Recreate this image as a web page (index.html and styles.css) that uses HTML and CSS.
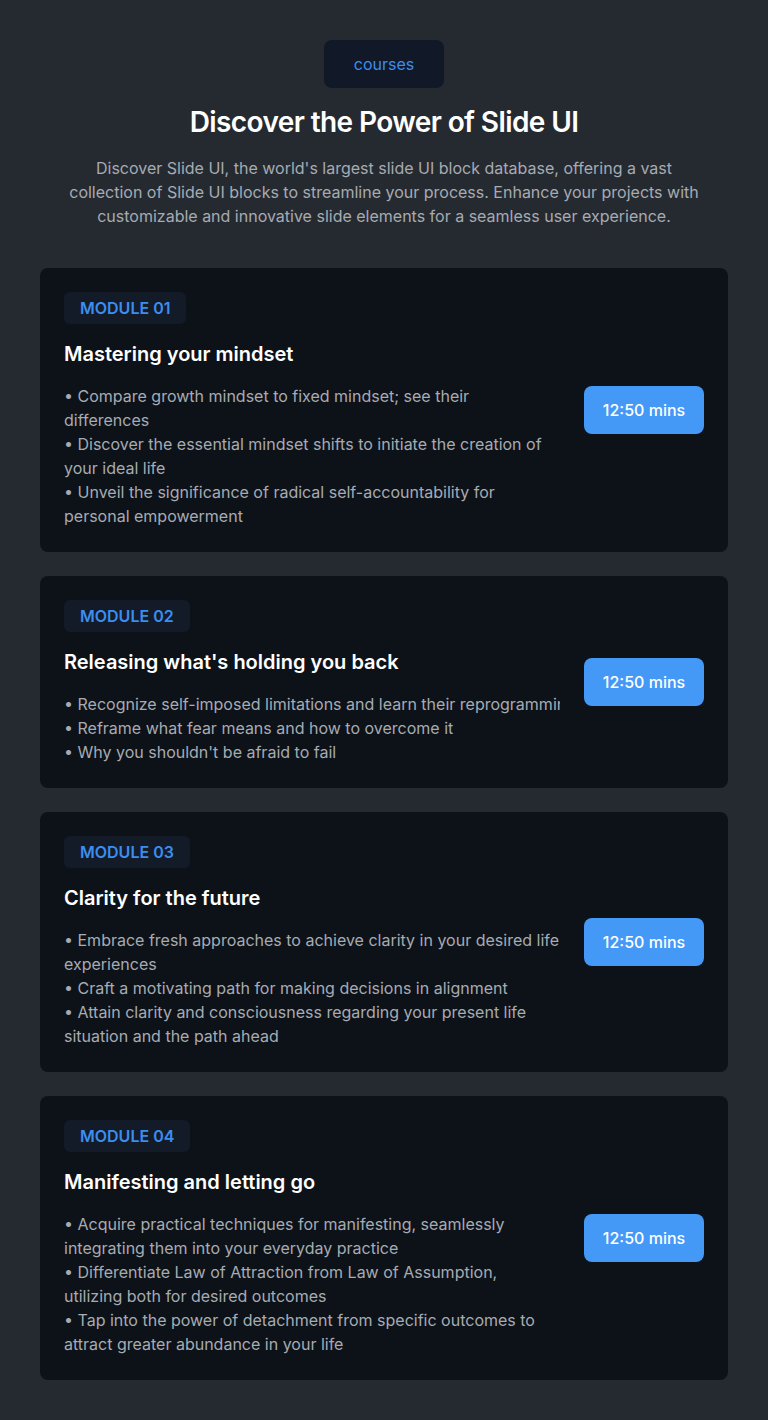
FILE: index.html
```html
<!DOCTYPE html>
<html lang="en">
<head>
<meta charset="utf-8">
<title>Courses</title>
<link rel="stylesheet" href="styles.css">
</head>
<body>
<main class="page">
  <header class="intro">
    <span class="tag">courses</span>
    <h1 class="heading">Discover the Power of Slide UI</h1>
    <p class="lead">Discover Slide UI, the world's largest slide UI block database, offering a vast collection of Slide UI blocks to streamline your process. Enhance your projects with customizable and innovative slide elements for a seamless user experience.</p>
  </header>

  <section class="modules">
    <article class="card">
      <div class="content">
        <span class="module-tag">MODULE 01</span>
        <h2 class="title">Mastering your mindset</h2>
        <ul class="points">
          <li class="tight">• Compare growth mindset to fixed mindset; see their differences</li>
          <li>• Discover the essential mindset shifts to initiate the creation of your ideal life</li>
          <li>• Unveil the significance of radical self-accountability for personal empowerment</li>
        </ul>
      </div>
      <button class="duration">12:50 mins</button>
    </article>

    <article class="card">
      <div class="content">
        <span class="module-tag">MODULE 02</span>
        <h2 class="title">Releasing what's holding you back</h2>
        <ul class="points">
          <li class="nowrap">• Recognize self-imposed limitations and learn their reprogramming</li>
          <li>• Reframe what fear means and how to overcome it</li>
          <li>• Why you shouldn't be afraid to fail</li>
        </ul>
      </div>
      <button class="duration">12:50 mins</button>
    </article>

    <article class="card">
      <div class="content">
        <span class="module-tag">MODULE 03</span>
        <h2 class="title">Clarity for the future</h2>
        <ul class="points">
          <li>• Embrace fresh approaches to achieve clarity in your desired life experiences</li>
          <li>• Craft a motivating path for making decisions in alignment</li>
          <li>• Attain clarity and consciousness regarding your present life situation and the path ahead</li>
        </ul>
      </div>
      <button class="duration">12:50 mins</button>
    </article>

    <article class="card">
      <div class="content">
        <span class="module-tag">MODULE 04</span>
        <h2 class="title">Manifesting and letting go</h2>
        <ul class="points">
          <li>• Acquire practical techniques for manifesting, seamlessly integrating them into your everyday practice</li>
          <li class="tight">• Differentiate Law of Attraction from Law of Assumption, utilizing both for desired outcomes</li>
          <li>• Tap into the power of detachment from specific outcomes to attract greater abundance in your life</li>
        </ul>
      </div>
      <button class="duration">12:50 mins</button>
    </article>
  </section>
</main>
</body>
</html>
```

FILE: styles.css
```css
* { box-sizing: border-box; }

html, body {
  margin: 0;
  padding: 0;
  background: #252a31;
  font-family: Inter, "Noto Sans", sans-serif;
  color: #f3f4f6;
}

.page {
  padding: 40px 40px 40px;
  display: flex;
  flex-direction: column;
  gap: 40px;
}

.intro {
  display: flex;
  flex-direction: column;
  align-items: center;
  text-align: center;
}

.tag {
  display: inline-flex;
  align-items: center;
  justify-content: center;
  width: 120px;
  height: 48px;
  border-radius: 8px;
  background: #111827;
  color: #3b8ef0;
  font-size: 16px;
  line-height: 24px;
}

.heading {
  margin: 16px 0 0;
  font-size: 28px;
  line-height: 36px;
  font-weight: 600;
  color: #ffffff;
  letter-spacing: -0.6px;
}

.lead {
  margin: 16px 0 0;
  max-width: 640px;
  font-size: 16px;
  line-height: 24px;
  color: #a7abb2;
}

.modules {
  display: flex;
  flex-direction: column;
  gap: 24px;
}

.card {
  display: flex;
  align-items: center;
  gap: 24px;
  padding: 24px;
  background: #0d1219;
  border-radius: 8px;
}

.content {
  flex: 1;
  min-width: 0;
  overflow: hidden;
  display: flex;
  flex-direction: column;
  align-items: flex-start;
}

.module-tag {
  display: inline-flex;
  align-items: center;
  height: 32px;
  padding: 0 16px;
  border-radius: 6px;
  background: #131b28;
  color: #3b8ef0;
  font-size: 16px;
  font-weight: 600;
  line-height: 24px;
}

.title {
  margin: 16px 0 0;
  font-size: 20px;
  line-height: 28px;
  font-weight: 600;
  color: #ffffff;
}

.points {
  list-style: none;
  margin: 16px 0 0;
  padding: 0;
  font-size: 16px;
  line-height: 24px;
  color: #a7abb2;
  width: 100%;
}

.points .tight {
  padding-right: 6px;
}

.points .nowrap {
  white-space: nowrap;
}

.duration {
  flex: none;
  width: 120px;
  height: 48px;
  border: none;
  border-radius: 8px;
  background: #4499f7;
  color: #ffffff;
  font-family: inherit;
  font-size: 16px;
  font-weight: 500;
  line-height: 24px;
}
```
